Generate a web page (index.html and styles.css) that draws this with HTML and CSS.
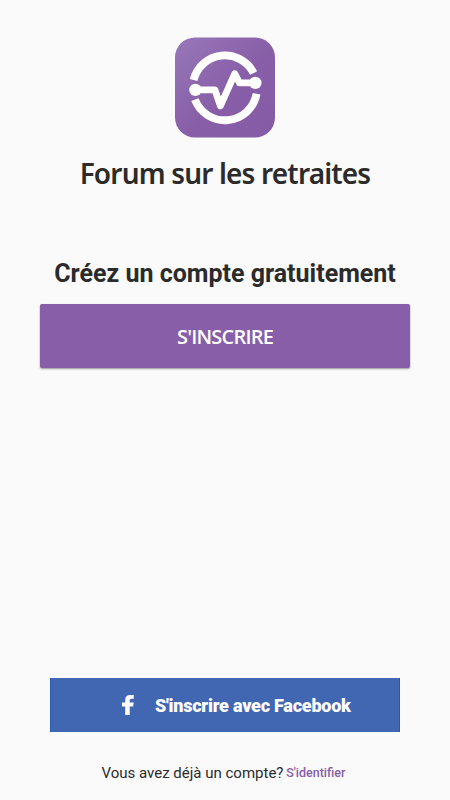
FILE: index.html
```html
<!DOCTYPE html>
<html lang="fr">
<head>
    <meta charset="UTF-8">
    <meta name="viewport" content="width=device-width, initial-scale=1.0">
    <title>Forum sur les retraites</title>
    <link rel="stylesheet" href="styles.css">
</head>
<body>

<header>
    <svg class="logo" viewBox="0 0 100 100">
        <defs>
            <linearGradient id="logoBg" x1="0" y1="0" x2="1" y2="1">
                <stop offset="0" stop-color="#9877b8"/>
                <stop offset="0.55" stop-color="#875ea7"/>
                <stop offset="1" stop-color="#855ba5"/>
            </linearGradient>
        </defs>
        <rect width="100" height="100" rx="20" fill="url(#logoBg)"/>
        <g fill="none" stroke="#fff">
            <path stroke-width="7.8" d="M18.6 42.5A32.2 32.2 0 0 1 78.6 35.6"/>
            <path stroke-width="7.8" d="M19.9 62.2A32.2 32.2 0 0 0 81.6 56.3"/>
            <path stroke-width="6.8" stroke-linejoin="round" d="M20.3 52.3H39.9L45.4 68.4L59.8 36.2L64.5 45.4H80.3"/>
        </g>
        <circle cx="20.4" cy="52.4" r="6.2" fill="#fff"/>
        <circle cx="80.3" cy="45.4" r="6.2" fill="#fff"/>
    </svg>
    <h1>Forum sur les retraites</h1>
</header>

<main>
    <h2>Créez un compte gratuitement</h2>
    <button class="signup-button">S'INSCRIRE</button>
</main>

<footer>
    <button class="facebook-button">
        <svg class="facebook-icon" viewBox="0 0 12 20">
            <path fill="#fff" d="M3.2 20V11.4H0V7.5H3.2V5C3.2 1.6 5 0 8.2 0H11.8V3.7H9.5C8.1 3.7 7.7 4.4 7.7 5.5V7.5H11.7L11.1 11.4H7.7V20Z"/>
        </svg>
        <span>S'inscrire avec Facebook</span>
    </button>
    <p class="login">Vous avez déjà un compte? <a href="#">S'identifier</a></p>
</footer>

</body>
</html>
```

FILE: styles.css
```css
body {
    margin: 0;
    height: 800px;
    background-color: #fafafa;
    color: #2b2b2b;
    font-family: Roboto, "Liberation Sans", sans-serif;
    display: flex;
    flex-direction: column;
    overflow: hidden;
}

header {
    padding-top: 37px;
    text-align: center;
}

.logo {
    display: block;
    width: 100px;
    height: 101px;
    margin: 0 auto;
}

h1 {
    margin: 15px 0 0;
    font-family: "Noto Sans", "Open Sans", sans-serif;
    font-size: 28px;
    font-weight: 600;
    line-height: 40px;
    letter-spacing: -0.83px;
    white-space: nowrap;
}

main {
    padding: 0 40px;
    margin-top: 65px;
    text-align: center;
}

h2 {
    margin: 0;
    font-size: 25px;
    font-weight: 700;
    line-height: 32px;
    white-space: nowrap;
}

button {
    border: none;
    color: #fff;
    cursor: pointer;
}

.signup-button {
    display: block;
    width: 370px;
    height: 64px;
    margin-top: 14px;
    padding: 1px 0 0;
    border-radius: 2px;
    background-color: #875ea7;
    box-shadow: 0 1px 2px rgba(0, 0, 0, 0.4);
    font-family: "Open Sans", "Noto Sans", sans-serif;
    font-size: 20px;
    font-weight: 600;
    letter-spacing: -0.8px;
}

footer {
    margin-top: auto;
    padding: 0 50px 16px;
}

.facebook-button {
    display: flex;
    align-items: center;
    gap: 21px;
    width: 350px;
    height: 54px;
    padding: 0 0 0 71px;
    border: 1px solid #235bb0;
    border-width: 0 1px;
    background-color: #4267b2;
    font-family: Roboto, "Liberation Sans", sans-serif;
    font-size: 18px;
    font-weight: 900;
    letter-spacing: -0.23px;
    white-space: nowrap;
}

.facebook-icon {
    width: 12px;
    height: 20px;
}

.login {
    margin: 30px 0 0;
    padding-right: 3px;
    text-align: center;
    font-size: 15px;
    line-height: 22px;
    white-space: nowrap;
}

.login a {
    margin-left: -1px;
    color: #875ea7;
    font-size: 12.5px;
    font-weight: 500;
    text-decoration: none;
    vertical-align: 1px;
}
```
